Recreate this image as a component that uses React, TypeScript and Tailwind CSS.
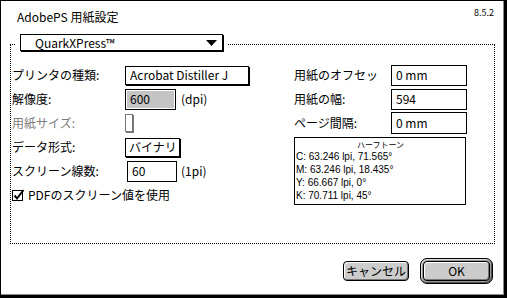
import React from "react";

const font = "font-['Osaka','Noto_Sans_CJK_JP',sans-serif]";

const Row = ({ children }: { children: React.ReactNode }) => (
  <div className="h-[24px] flex items-center">{children}</div>
);

const Halftone = () => {
  const lines = [
    "C: 63.246 lpi, 71.565°",
    "M: 63.246 lpi, 18.435°",
    "Y: 66.667 lpi, 0°",
    "K: 70.711 lpi, 45°",
  ];
  return (
    <div className="mt-[2px] w-[172px] h-[68px] border border-black pt-[1px] pl-[1px] text-black">
      <div className="text-center text-[8px] leading-[11px]">ハーフトーン</div>
      {lines.map((l) => (
        <div key={l} className="font-['Liberation_Sans',sans-serif] text-[10px] leading-[13px]">
          {l}
        </div>
      ))}
    </div>
  );
};

const Check = () => (
  <svg width="13" height="13" viewBox="0 0 13 13" className="shrink-0">
    <rect x="0.5" y="1.5" width="10" height="10" fill="white" stroke="black" />
    <path d="M2.5 6.5 L5 9.5 L11.5 1" fill="none" stroke="black" strokeWidth="2" />
  </svg>
);

export default function App() {
  return (
    <div
      className={`${font} w-[507px] h-[298px] bg-white text-black text-[12px] leading-[16px] border-t border-l border-r-[3px] border-b-[3px] border-black shadow-[inset_-1px_-1px_0_#8a8a8a] overflow-hidden`}
    >
      {/* header */}
      <div className="h-[43px] flex justify-between pl-[16px] pr-[10px]">
        <span className="mt-[8px]">AdobePS 用紙設定</span>
        <span className="mt-[7px] text-[9px] leading-[10px]">8.5.2</span>
      </div>

      {/* group box */}
      <div className="ml-[9px] w-[485px] h-[200px] border border-dotted border-black">
        <div className="-mt-[11px] ml-[4px] w-max bg-white px-[5px] h-[18px]">
          <div className="w-[203px] h-[17px] border border-black shadow-[1px_1px_0_#000] bg-white flex items-center justify-between pl-[14px] pr-[5px]">
            <span className="leading-[14px]">QuarkXPress™</span>
            <svg width="11" height="6" viewBox="0 0 11 6">
              <path d="M0 0 H11 L5.5 6 Z" fill="black" />
            </svg>
          </div>
        </div>

        <div className="mt-[11px] flex">
          {/* left column */}
          <div className="w-[283px] pl-[1px] flex flex-col">
            <Row>
              <span className="w-[113px]">プリンタの種類:</span>
              <div className="w-[124px] h-[19px] border border-black shadow-[1px_1px_0_#000] pl-[4px] flex items-center">
                Acrobat Distiller J
              </div>
            </Row>
            <Row>
              <span className="w-[113px]">解像度:</span>
              <div className="w-[51px] h-[21px] border border-black p-[1px]">
                <div className="h-full bg-[#c4c4c4] pl-[3px] flex items-center">600</div>
              </div>
              <span className="ml-[5px]">(dpi)</span>
            </Row>
            <Row>
              <span className="w-[113px] text-[#7c7c7c]">用紙サイズ:</span>
              <div className="w-[8px] h-[18px] border border-[#777] shadow-[1px_1px_0_#777]" />
            </Row>
            <Row>
              <span className="w-[113px]">データ形式:</span>
              <div className="w-[55px] h-[19px] border border-black shadow-[1px_1px_0_#000] pl-[3px] flex items-center">
                バイナリ
              </div>
            </Row>
            <Row>
              <span className="w-[115px]">スクリーン線数:</span>
              <div className="w-[50px] h-[21px] border border-black pl-[4px] flex items-center">60</div>
              <span className="ml-[4px]">(1pi)</span>
            </Row>
            <Row>
              <div className="flex items-center gap-[3px]">
                <Check />
                <span>PDFのスクリーン値を使用</span>
              </div>
            </Row>
          </div>

          {/* right column */}
          <div className="flex flex-col">
            <Row>
              <span className="w-[97px]">用紙のオフセッ</span>
              <div className="w-[76px] h-[21px] border border-black pl-[4px] flex items-center">0 mm</div>
            </Row>
            <Row>
              <span className="w-[97px]">用紙の幅:</span>
              <div className="w-[76px] h-[21px] border border-black pl-[4px] flex items-center">594</div>
            </Row>
            <Row>
              <span className="w-[97px]">ページ間隔:</span>
              <div className="w-[76px] h-[22px] border border-black pl-[4px] flex items-center">0 mm</div>
            </Row>
            <Halftone />
          </div>
        </div>
      </div>

      {/* buttons */}
      <div className="mt-[14px] flex justify-end items-center gap-[11px] pr-[11px]">
        <div className="w-[66px] h-[20px] rounded-[4px] border border-black bg-[#cccccc] shadow-[inset_1px_1px_0_#fff,inset_-1px_-1px_0_#777] flex items-center justify-center">
          キャンセル
        </div>
        <div className="w-[73px] h-[26px] rounded-[7px] border border-black bg-[#999] shadow-[inset_1px_1px_0_#ddd,inset_-1px_-1px_0_#555] p-[2px]">
          <div className="w-full h-full rounded-[4px] border border-black bg-[#cccccc] shadow-[inset_1px_1px_0_#fff,inset_-1px_-1px_0_#777] flex items-center justify-center">
            OK
          </div>
        </div>
      </div>
    </div>
  );
}
